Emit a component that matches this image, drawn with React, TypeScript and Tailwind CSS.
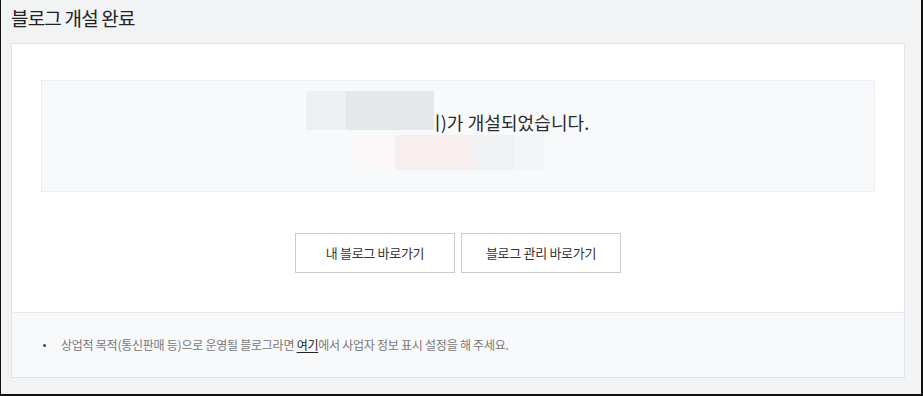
import React from "react";

export default function App() {
  return (
    <div className="w-[923px] h-[396px] bg-[#f2f3f5] border-l border-r-2 border-b-2 border-[#111] overflow-hidden font-['Noto_Sans_CJK_KR','Noto_Sans',sans-serif]">
      <h1 className="pl-[10px] pt-[4px] h-[43px] text-[19px] leading-[28px] text-[#222] font-normal tracking-[-0.8px]">
        블로그 개설 완료
      </h1>
      <div className="ml-[10px] w-[894px] border border-[#e1e3e6] bg-white">
        <div className="px-[29px] pt-[36px] pb-[39px]">
          <div className="h-[112px] border border-[#eceef1] bg-[#f8f9fb]">
            <div className="flex items-end pl-[264px] pt-[10px]">
              <div className="w-[40px] h-[39px] bg-[#eeeff1]" />
              <div className="relative z-10 w-[88px] h-[39px] bg-[#e6e7e9]" />
              <span className="ml-[-10px] mb-[-4px] text-[18px] leading-[24px] text-[#2a2a2a] whitespace-nowrap tracking-[0.1px]">
                이)가 개설되었습니다.
              </span>
            </div>
            <div className="flex pl-[313px] mt-[5px]">
              <div className="w-[40px] h-[35px] bg-[#fcf8f9]" />
              <div className="w-[78px] h-[35px] bg-[#f8eeee]" />
              <div className="w-[42px] h-[35px] bg-[#f0f1f3]" />
              <div className="w-[29px] h-[35px] bg-[#f4f5f7]" />
            </div>
          </div>
          <div className="mt-[41px] flex justify-center gap-[6px]">
            <button className="w-[160px] h-[40px] border border-[#c9cbce] bg-white text-[13px] text-[#333] tracking-[-0.3px]">
              내 블로그 바로가기
            </button>
            <button className="w-[160px] h-[40px] border border-[#c9cbce] bg-white text-[13px] text-[#333] tracking-[-0.3px]">
              블로그 관리 바로가기
            </button>
          </div>
        </div>
        <div className="h-[65px] border-t border-[#e9ebee] bg-[#f8f9fa] flex items-center pl-[31px]">
          <div className="w-[3px] h-[3px] rounded-full bg-[#444]" />
          <p className="ml-[15px] text-[12px] leading-[18px] text-[#777] tracking-[-0.25px] whitespace-nowrap">
            상업적 목적(통신판매 등)으로 운영될 블로그라면{" "}
            <span className="text-[#222] underline underline-offset-2">여기</span>에서 사업자 정보 표시 설정을 해 주세요.
          </p>
        </div>
      </div>
    </div>
  );
}
